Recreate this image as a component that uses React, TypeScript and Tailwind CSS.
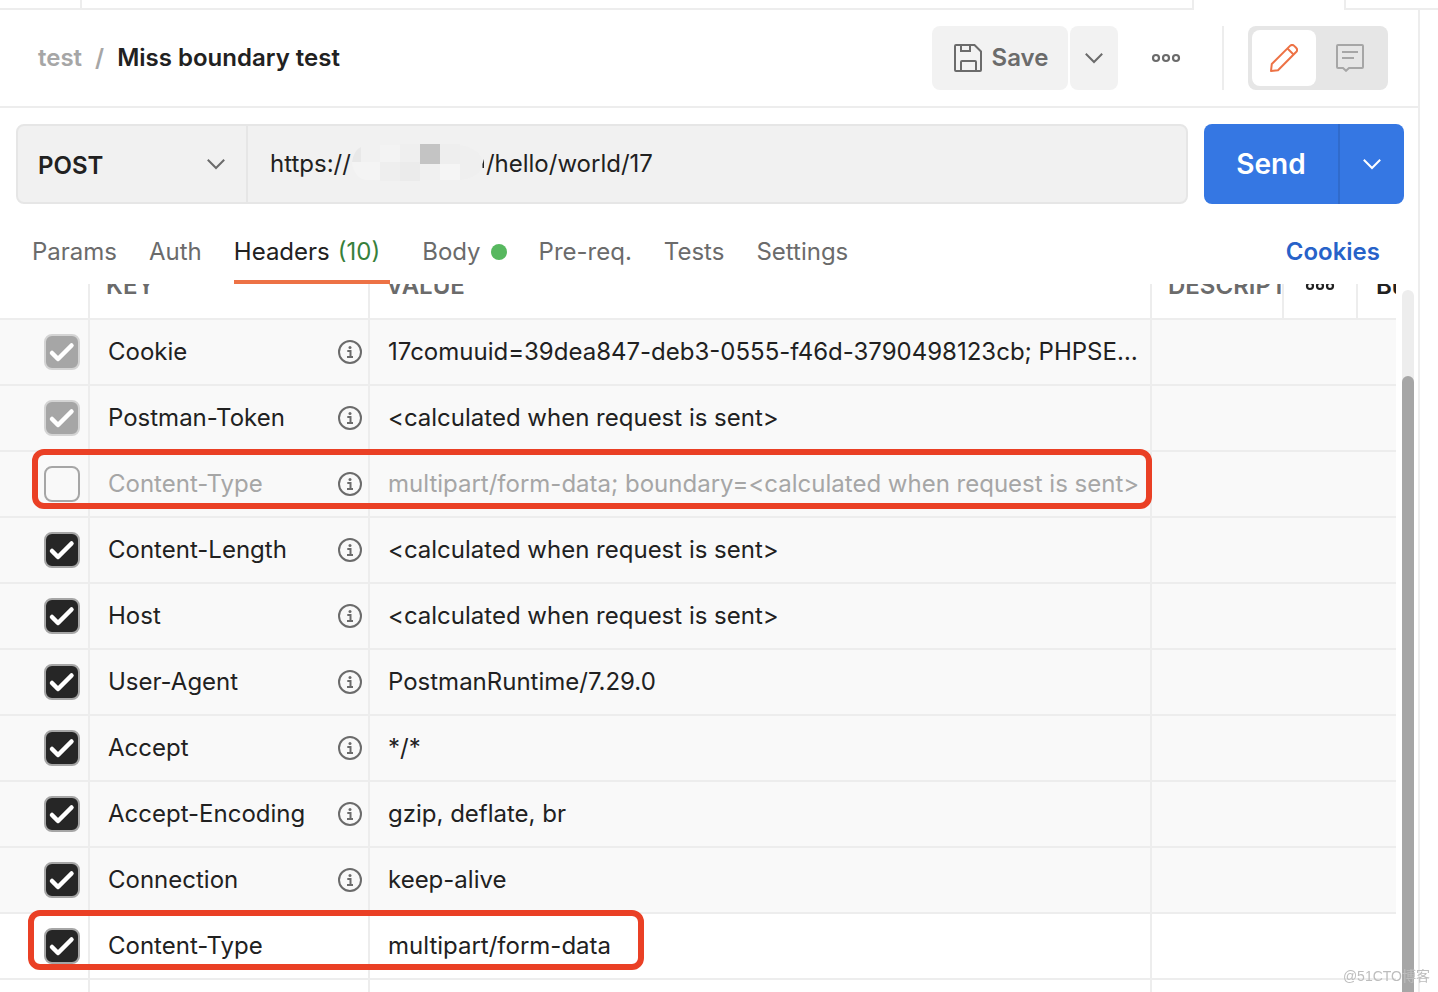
import React, { useState } from 'react';

interface HeaderRow {
  id: number;
  name: string;
  value: string;
  enabled: boolean;
  locked?: boolean;
  auto?: boolean;
  mark?: string;
}

const initialRows: HeaderRow[] = [
  { id: 1, name: 'Cookie', value: '17comuuid=39dea847-deb3-0555-f46d-3790498123cb; PHPSESSID=calculated', enabled: true, locked: true, auto: true },
  { id: 2, name: 'Postman-Token', value: '<calculated when request is sent>', enabled: true, locked: true, auto: true },
  { id: 3, name: 'Content-Type', value: 'multipart/form-data; boundary=<calculated when request is sent>', enabled: false, auto: true, mark: '-top-[3px] left-8 right-[244px]' },
  { id: 4, name: 'Content-Length', value: '<calculated when request is sent>', enabled: true, auto: true },
  { id: 5, name: 'Host', value: '<calculated when request is sent>', enabled: true, auto: true },
  { id: 6, name: 'User-Agent', value: 'PostmanRuntime/7.29.0', enabled: true, auto: true },
  { id: 7, name: 'Accept', value: '*/*', enabled: true, auto: true },
  { id: 8, name: 'Accept-Encoding', value: 'gzip, deflate, br', enabled: true, auto: true },
  { id: 9, name: 'Connection', value: 'keep-alive', enabled: true, auto: true },
  { id: 10, name: 'Content-Type', value: 'multipart/form-data', enabled: true, mark: '-top-1 left-7 w-[616px]' },
];

const Chevron = ({ className = '' }: { className?: string }) => (
  <svg width="20" height="12" viewBox="0 0 20 12" fill="none" stroke="currentColor" strokeWidth="2" className={className}>
    <path d="M1.8 1.8 10 10l8.200-8.200" />
  </svg>
);

const Dots = () => (
  <svg width="30" height="10" viewBox="0 0 30 10" fill="none" stroke="currentColor" strokeWidth="2.200">
    <circle cx="5" cy="5" r="3" />
    <circle cx="15" cy="5" r="3" />
    <circle cx="25" cy="5" r="3" />
  </svg>
);

const SaveIcon = () => (
  <svg width="28" height="28" viewBox="0 0 28 28" fill="none" stroke="currentColor" strokeWidth="2">
    <path d="M2 1h18.500L27 7.500V26a1 1 0 0 1-1 1H2a1 1 0 0 1-1-1V2a1 1 0 0 1 1-1Z" />
    <path d="M7 1v6h9V1M7 27V18a1 1 0 0 1 1-1h13a1 1 0 0 1 1 1v9" />
  </svg>
);

const PencilIcon = () => (
  <svg width="28" height="28" viewBox="0 0 28 28" fill="none" stroke="currentColor" strokeWidth="2" strokeLinejoin="round">
    <path d="M1 27l.8-7L20 1.900a3 3 0 0 1 4.200 0l1.900 1.900a3 3 0 0 1 0 4.200L8 26.200 1 27Z" />
    <path d="M17.500 4.500l6 6" />
  </svg>
);

const CommentIcon = () => (
  <svg width="28" height="28" viewBox="0 0 28 28" fill="none" stroke="currentColor" strokeWidth="2">
    <path d="M2 1h24a1 1 0 0 1 1 1v21a1 1 0 0 1-1 1H13l-3 2.800L7 24H2a1 1 0 0 1-1-1V2a1 1 0 0 1 1-1Z" />
    <path d="M6 8h16M6 14h12" />
  </svg>
);

const InfoIcon = () => (
  <svg width="24" height="24" viewBox="0 0 24 24" fill="none" stroke="#6b6b6b" strokeWidth="2">
    <circle cx="12" cy="12" r="11" />
    <path d="M9.300 11H12.500v6.500M9 17h6" />
    <circle cx="12" cy="7.600" r="1.500" fill="#6b6b6b" stroke="none" />
  </svg>
);

// pixelated patch that hides the host name
const HostMask = () => (
  <svg width="136" height="38" viewBox="0 0 136 38" className="pointer-events-none absolute left-[104px] top-[18px]">
    <path d="M0 18Q2 6 9 3v15Z" fill="#e8e8e8" />
    <path d="M0 18h28v18H14Q2 34 0 18Z" fill="#f4f4f4" />
    <path d="M28 1h20v17H28z" fill="#f3f3f3" />
    <path d="M48 0h20v18H48z" fill="#efefef" />
    <path d="M68 0h20v20H68z" fill="#c4c4c4" />
    <path d="M88 0h20v20H88z" fill="#eeeeee" />
    <path d="M28 18h20v19H28z" fill="#eeeeee" />
    <path d="M48 18h20v19H48z" fill="#ebebeb" />
    <path d="M68 20h20v16H68z" fill="#f0f0f0" />
    <path d="M88 20h20v16H88z" fill="#f5f5f5" />
    <path d="M108 1q22 4 23 19-3 14-23 16Z" fill="#efefef" />
    <path d="M130.500 24v-4l1.500-5v9Z" fill="#212121" />
  </svg>
);

const App: React.FC = () => {
  const [rows, setRows] = useState<HeaderRow[]>(initialRows);
  const [url, setUrl] = useState('https://' + '\u00a0'.repeat(20) + '/hello/world/17');

  const toggle = (id: number) => {
    setRows(rows.map(r => (r.id === id ? { ...r, enabled: !r.enabled } : r)));
  };

  return (
    <div className="h-screen flex flex-col overflow-hidden bg-white text-2xl text-[#212121] font-['Inter','Noto_Sans_CJK_SC',sans-serif]">
      <div className="flex h-[10px] shrink-0">
        <div className="w-[82px] border-r-2 border-b-2 border-[#ededed]" />
        <div className="flex-1 border-r-2 border-b-2 border-[#ededed]" />
        <div className="w-[150px]" />
        <div className="w-[94px] border-l-2 border-b-2 border-[#ededed]" />
      </div>

      <main className="flex-1 min-h-0 flex flex-col mr-[18px] border-r-2 border-[#ededed]">
        <header className="flex items-center justify-between py-4 pl-[38px] pr-[30px] border-b-2 border-[#ededed]">
          <div className="flex items-center gap-[13px] font-semibold">
            <a href="#collection" className="text-[#a6a6a6]">test</a>
            <span className="text-[#a6a6a6]">/</span>
            <h1>Miss boundary test</h1>
          </div>
          <div className="flex items-center text-[#6b6b6b]">
            <button className="flex items-center justify-center gap-[10px] w-[136px] h-16 pl-[2px] rounded-lg bg-[#f2f2f2] font-semibold">
              <SaveIcon />
              Save
            </button>
            <button aria-label="Save options" className="flex items-center justify-center w-12 h-16 ml-[2px] rounded-lg bg-[#f2f2f2]">
              <Chevron />
            </button>
            <button aria-label="More actions" className="flex items-center justify-center w-12 h-16 ml-6">
              <Dots />
            </button>
            <div className="w-[2px] h-16 ml-8 mr-6 bg-[#ededed]" />
            <div className="flex p-1 rounded-lg bg-[#e6e6e6]">
              <button aria-label="Edit" className="flex items-center justify-center w-16 h-14 rounded-lg bg-white text-[#ed7245]">
                <PencilIcon />
              </button>
              <button aria-label="Comments" className="flex items-center justify-center w-[68px] h-14 text-[#a6a6a6]">
                <CommentIcon />
              </button>
            </div>
          </div>
        </header>

        <div className="flex gap-4 pt-4 pl-4 pr-[14px]">
          <div className="flex flex-1 min-w-0 h-20 rounded-lg border-2 border-[#e6e6e6] bg-[#f1f1f1]">
            <div className="relative flex w-[230px] border-r-2 border-[#e6e6e6]">
              <select aria-label="Method" defaultValue="POST" className="w-full appearance-none bg-transparent pl-5 pt-1 font-semibold">
                <option>POST</option>
                <option>GET</option>
              </select>
              <Chevron className="pointer-events-none absolute right-5 top-8 text-[#6b6b6b]" />
            </div>
            <div className="relative flex flex-1 min-w-0">
              <input
                aria-label="Request URL"
                value={url}
                onChange={e => setUrl(e.target.value)}
                className="w-full bg-transparent px-[22px] outline-none"
              />
              <HostMask />
            </div>
          </div>
          <div className="flex h-20 rounded-lg overflow-hidden bg-[#3577e3] text-white">
            <button className="w-[134px] pt-[2px] text-[28px] font-semibold">Send</button>
            <button aria-label="Send options" className="flex items-center justify-center w-[66px] border-l-2 border-[#306bcc]">
              <Chevron />
            </button>
          </div>
        </div>

        <nav className="flex items-stretch h-20 shrink-0 pt-4 pl-8 pr-[38px] text-[#6b6b6b]">
          <div className="flex gap-8">
            <button>Params</button>
            <button>Auth</button>
            <button className="flex items-center gap-2 pr-[10px] pt-1 border-b-4 border-[#ed7245] text-[#212121]">
              Headers <span className="text-[#37803b]">(10)</span>
            </button>
            <button className="flex items-center gap-[10px]">
              Body <span className="w-4 h-4 rounded-full bg-[#57b85f]" />
            </button>
            <button>Pre-req.</button>
            <button>Tests</button>
            <button>Settings</button>
          </div>
          <a href="#cookies" className="ml-auto self-center font-semibold text-[#2762c9]">Cookies</a>
        </nav>

        <div className="flex flex-1 min-h-0">
          <div className="flex-1 min-w-0 overflow-hidden">
            <table className="w-full table-fixed border-separate border-spacing-0 -mt-[30px]">
              <colgroup>
                <col className="w-[90px]" />
                <col className="w-[280px]" />
                <col />
                <col className="w-[132px]" />
                <col className="w-[74px]" />
                <col className="w-[38px]" />
              </colgroup>
              <thead>
                <tr className="h-[66px] text-left text-[#6b6b6b] [&>th]:border-b-2 [&>th]:border-[#ededed] [&>th]:font-semibold">
                  <th className="border-r-2" />
                  <th className="border-r-2 pl-4">KEY</th>
                  <th className="border-r-2 pl-4">VALUE</th>
                  <th className="border-r-2 pl-4 overflow-hidden">DESCRIPTION</th>
                  <th className="border-r-2">
                    <button aria-label="Column options" className="flex w-full justify-center text-[#212121]">
                      <Dots />
                    </button>
                  </th>
                  <th className="pl-[18px] overflow-hidden whitespace-nowrap text-[#212121]">Bulk Edit</th>
                </tr>
              </thead>
              <tbody>
                {rows.map(row => (
                  <tr
                    key={row.id}
                    className={`relative h-[66px] [&>td]:border-b-2 [&>td]:border-[#ededed] ${row.auto ? 'bg-[#f9f9f9]' : 'bg-white'} ${row.enabled ? '' : 'text-[#a6a6a6]'}`}
                  >
                    <td className="border-r-2 pl-11">
                      <label className="relative flex w-9 h-9">
                        <input
                          type="checkbox"
                          aria-label={row.name}
                          checked={row.enabled}
                          disabled={row.locked}
                          onChange={() => toggle(row.id)}
                          className="w-9 h-9 appearance-none rounded-lg border-2 border-[#a6a6a6] checked:bg-[#262626] disabled:bg-[#a6a6a6] disabled:border-[#d4d4d4]"
                        />
                        {row.enabled && (
                          <svg viewBox="0 0 36 36" fill="none" stroke="white" strokeWidth="4.500" strokeLinecap="round" strokeLinejoin="round" className="pointer-events-none absolute inset-0 w-9 h-9">
                            <path d="M8 19l6 6L27.500 11.500" />
                          </svg>
                        )}
                      </label>
                      {row.mark && (
                        <span className={`pointer-events-none absolute z-10 h-[60px] rounded-xl border-[6px] border-[#ea4025] ${row.mark}`} />
                      )}
                    </td>
                    <td className="border-r-2 pl-[18px] pr-[6px]">
                      <div className="flex items-center justify-between">
                        <span>{row.name}</span>
                        {row.auto && <InfoIcon />}
                      </div>
                    </td>
                    <td className="border-r-2 pl-[18px] pr-[10px] truncate">{row.value}</td>
                    <td colSpan={3} />
                  </tr>
                ))}
                <tr className="h-[66px]">
                  <td className="border-r-2 border-[#ededed]" />
                  <td className="border-r-2 border-[#ededed]" />
                  <td className="border-r-2 border-[#ededed]" />
                  <td colSpan={3} />
                </tr>
              </tbody>
            </table>
          </div>
          <div className="flex w-3 ml-[6px] mr-1 mt-[6px] rounded-t-full bg-[#ededed]">
            <div className="w-3 mt-[86px] rounded-t-full bg-[#a6a6a6]" />
          </div>
        </div>
      </main>

      <span className="pointer-events-none fixed right-2 bottom-[6px] z-20 text-sm text-[#bdbdbd] font-['Liberation_Sans','Noto_Sans_CJK_SC',sans-serif]">@51CTO博客</span>
    </div>
  );
};

export default App;
